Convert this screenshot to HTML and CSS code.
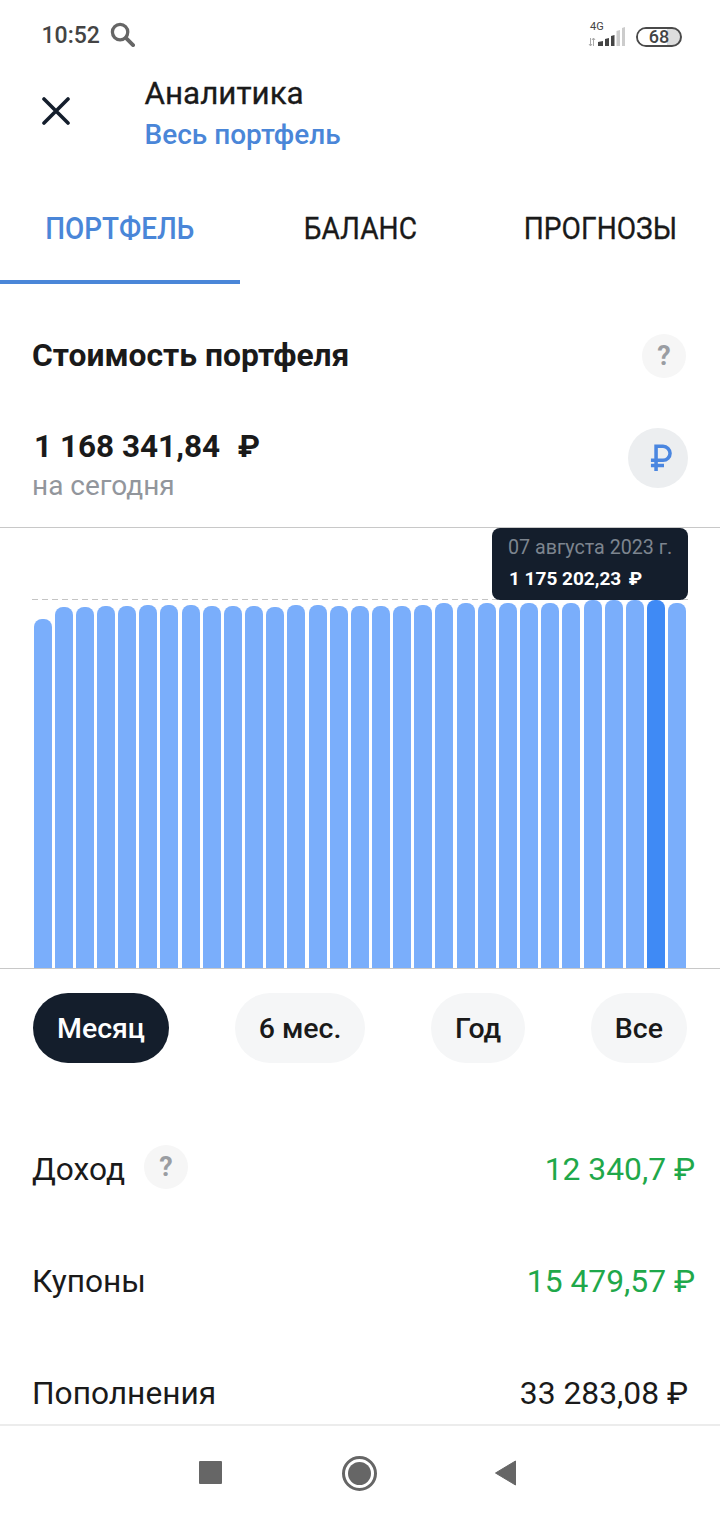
FILE: index.html
```html
<!DOCTYPE html>
<html lang="ru">
<head>
<meta charset="utf-8">
<title>Аналитика</title>
<link rel="stylesheet" href="styles.css">
</head>
<body>
<div class="screen">
  <div class="status">
    <div class="status-left">
      <span class="time">10:52</span>
      <svg class="search" viewBox="0 0 26 26" width="25" height="25"><circle cx="10.500" cy="10.500" r="8" fill="none" stroke="#666" stroke-width="3.400"/><path d="M16.500 16.500L24 24" stroke="#666" stroke-width="4" stroke-linecap="round"/></svg>
    </div>
    <div class="status-right">
      <div class="signal">
        <span class="net">4G</span>
        <svg viewBox="0 0 38 22" width="38" height="22"><path d="M2.500 13v8M1 19l1.500 2L4 19M5.500 21v-8M4 15l1.500-2L7 15" fill="none" stroke="#aaa" stroke-width="1"/><g fill="#444"><path d="M10 17l5-1v5h-5z"/><path d="M17 14l4-1v8h-4z"/><path d="M23 11l3.500-1v11H23z"/></g><g fill="#ccc"><path d="M28.500 6L32 5v16h-3.500z"/><path d="M34 3l3-1v19h-3z"/></g></svg>
      </div>
      <div class="battery"><span class="battery-fill"></span><span class="battery-num">68</span></div>
    </div>
  </div>

  <header class="head">
    <svg class="close" viewBox="0 0 28 28" width="28" height="28"><path d="M2 2L26 26M26 2L2 26" stroke="#141e2c" stroke-width="3.600" stroke-linecap="round"/></svg>
    <div class="head-text">
      <div class="head-title">Аналитика</div>
      <div class="head-sub">Весь портфель</div>
    </div>
  </header>

  <nav class="tabs">
    <div class="tab tab-active"><span class="tab-label">ПОРТФЕЛЬ</span></div>
    <div class="tab"><span class="tab-label">БАЛАНС</span></div>
    <div class="tab"><span class="tab-label">ПРОГНОЗЫ</span></div>
  </nav>

  <main class="content">
    <section class="cost-head">
      <h2 class="cost-title">Стоимость портфеля</h2>
      <span class="help help-big">?</span>
    </section>

    <section class="amount-row">
      <div>
        <div class="amount">1 168 341,84&nbsp; <span class="amount-cur">₽</span></div>
        <div class="amount-sub">на сегодня</div>
      </div>
      <div class="currency">
        <svg viewBox="0 0 24 30" width="22.400" height="28"><path d="M6.500 29V2.500H14a7.500 7.500 0 0 1 0 15H1M1 23H15" fill="none" stroke="#4a86e0" stroke-width="3.800"/></svg>
      </div>
    </section>

    <section class="chart">
      <div class="dash"></div>
      <div class="tooltip">
        <div class="tip-date">07 августа 2023 г.</div>
        <div class="tip-val">1 175 202,23&nbsp; <span class="tip-cur">₽</span></div>
      </div>
      <div class="bars">
        <i class="bar" style="height:349px"></i><i class="bar" style="height:361px"></i><i class="bar" style="height:361px"></i><i class="bar" style="height:362px"></i><i class="bar" style="height:362px"></i><i class="bar" style="height:363px"></i><i class="bar" style="height:363px"></i><i class="bar" style="height:363px"></i><i class="bar" style="height:362px"></i><i class="bar" style="height:362px"></i><i class="bar" style="height:362px"></i><i class="bar" style="height:361px"></i><i class="bar" style="height:363px"></i><i class="bar" style="height:363px"></i><i class="bar" style="height:362px"></i><i class="bar" style="height:362px"></i><i class="bar" style="height:362px"></i><i class="bar" style="height:362px"></i><i class="bar" style="height:363px"></i><i class="bar" style="height:365px"></i><i class="bar" style="height:365px"></i><i class="bar" style="height:365px"></i><i class="bar" style="height:365px"></i><i class="bar" style="height:365px"></i><i class="bar" style="height:365px"></i><i class="bar" style="height:365px"></i><i class="bar" style="height:368px"></i><i class="bar" style="height:368px"></i><i class="bar" style="height:368px"></i><i class="bar bar-on" style="height:368px"></i><i class="bar" style="height:365px"></i>
      </div>
    </section>

    <section class="periods">
      <span class="pill pill-on">Месяц</span>
      <span class="pill">6 мес.</span>
      <span class="pill">Год</span>
      <span class="pill">Все</span>
    </section>

    <section class="rows">
      <div class="row">
        <div class="row-label">Доход <span class="help help-inline">?</span></div>
        <div class="row-val green">12 340,7 ₽</div>
      </div>
      <div class="row">
        <div class="row-label">Купоны</div>
        <div class="row-val green">15 479,57 ₽</div>
      </div>
      <div class="row">
        <div class="row-label">Пополнения</div>
        <div class="row-val">33 283,08 ₽</div>
      </div>
    </section>
  </main>

  <footer class="navbar">
    <span class="nav-square"></span>
    <span class="nav-circle"><span class="nav-dot"></span></span>
    <svg viewBox="0 0 24 28" width="24" height="28"><path d="M22.500 2V26L2.500 14Z" fill="#666" stroke="#666" stroke-width="1" stroke-linejoin="round"/></svg>
  </footer>
</div>
</body>
</html>
```
FILE: styles.css
```css
* { box-sizing: border-box; }
html, body { margin: 0; padding: 0; }
body { background: #fff; font-family: Roboto, "Noto Sans", sans-serif; color: #1a1a1a; }
.screen { width: 720px; height: 1520px; display: flex; flex-direction: column; overflow: hidden; background: #fff; }

.status { height: 70px; flex: none; display: flex; justify-content: space-between; align-items: center; padding: 0 38px 0 41.500px; }
.status-left { display: flex; align-items: center; gap: 10px; }
.time { font-size: 23px; font-weight: 500; color: #444; }
.search { display: block; margin-top: -2px; }
.status-right { display: flex; align-items: flex-end; gap: 10px; }
.signal { position: relative; width: 38px; height: 24px; display: flex; align-items: flex-end; }
.net { position: absolute; left: 2px; top: -2px; font-size: 11px; line-height: 11px; color: #444; }
.signal svg { display: block; }
.battery { position: relative; width: 46px; height: 20px; border: 2.500px solid #4a4a4a; border-radius: 10px; display: flex; align-items: center; justify-content: center; overflow: hidden; background: #ddd; }
.battery-fill { position: absolute; left: 0; top: 0; bottom: 0; width: 68%; background: #fff; }
.battery-num { position: relative; font-size: 18px; line-height: 18px; font-weight: 500; color: #444; }

.head { flex: none; height: 88px; display: flex; align-items: center; padding: 0 0 0 42px; }
.close { display: block; margin-top: -7px; }
.head-text { margin-left: 74.500px; }
.head-title { font-size: 31.400px; line-height: 40px; font-weight: 400; color: #1a1a1a; -webkit-text-stroke: 0.3px #1a1a1a; }
.head-sub { font-size: 28px; line-height: 41px; font-weight: 500; color: #4a86d8; }

.tabs { flex: none; display: grid; grid-template-columns: repeat(3, 240px); height: 126px; }
.tab { display: flex; justify-content: center; align-items: flex-start; padding-top: 52px; }
.tab-label { display: block; font-size: 31px; line-height: 38px; font-weight: 400; color: #1a1a1a; transform: scaleX(0.908); white-space: nowrap; -webkit-text-stroke: 0.3px #1a1a1a; }
.tab-active { border-bottom: 4px solid #4a86d8; }
.tab-active .tab-label { color: #4a86d8; font-weight: 500; transform: scaleX(0.9); -webkit-text-stroke: 0; }

.content { flex: 1; min-height: 0; overflow: hidden; }

.cost-head { display: flex; justify-content: space-between; align-items: center; height: 93px; padding: 49px 34px 0 32px; }
.cost-title { margin: 0; font-size: 31.800px; line-height: 44px; font-weight: 700; color: #1a1a1a; }
.help { display: inline-flex; width: 44px; height: 44px; border-radius: 50%; background: #f6f6f6; color: #9a9da2; font-size: 27px; font-weight: 700; align-items: center; justify-content: center; }
.help-big { margin-top: 2px; }
.help-inline { margin: -4px 0 0 1px; }

.amount-row { display: flex; justify-content: space-between; align-items: flex-start; padding: 48px 32px 0; height: 151px; border-bottom: 1px solid #c8c8c8; }
.amount { font-size: 31.500px; line-height: 44px; font-weight: 700; color: #1a1a1a; padding-left: 2px; }
.amount-cur { margin-left: 2px; }
.amount-sub { font-size: 28px; line-height: 36px; color: #92969c; margin-top: -1px; }
.currency { width: 60px; height: 60px; border-radius: 50%; background: #eceef0; display: flex; align-items: center; justify-content: center; margin-top: 3px; }
.currency svg { display: block; margin-left: 6px; }

.chart { position: relative; height: 441px; border-bottom: 1px solid #c8c8c8; padding: 0 33.500px; display: flex; align-items: flex-end; }
.bars { width: 100%; display: flex; justify-content: space-between; align-items: flex-end; }
.bar { display: block; width: 18px; background: #7aaefb; border-radius: 8px 8px 0 0; }
.bar-on { background: #3f8af5; }
.dash { position: absolute; left: 32px; right: 32px; top: 71px; height: 1px; background: repeating-linear-gradient(90deg, #c4c4c4 0 6px, transparent 6px 10px); }
.tooltip { position: absolute; right: 32px; top: 0; width: 196px; height: 72px; background: #141e2c; border-radius: 8px; padding: 7px 16px 0; z-index: 2; }
.tip-date { font-size: 19.700px; line-height: 26px; color: #7d858f; white-space: nowrap; }
.tip-val { font-size: 19px; line-height: 32px; font-weight: 700; color: #fff; margin-top: 2px; padding-left: 1px; white-space: nowrap; }
.tip-cur { margin-left: -2px; }

.periods { display: flex; justify-content: space-between; padding: 24px 33px 0; }
.pill { height: 70px; border-radius: 35px; background: #f5f6f7; display: flex; align-items: center; justify-content: center; font-size: 28.500px; font-weight: 500; color: #1a1a1a; padding: 0 24px; }
.pill-on { background: #141e2c; color: #fff; }

.rows { padding: 84px 32px 0; }
.row { display: flex; justify-content: space-between; align-items: center; height: 44px; margin-bottom: 68px; }
.row-label { display: flex; align-items: center; gap: 18px; font-size: 31.700px; color: #1a1a1a; }
.row-val { font-size: 31.800px; color: #1a1a1a; }
.green { color: #1fa84a; margin-right: -7px; }

.navbar { flex: none; height: 96px; border-top: 2px solid #ececec; background: #fff; display: flex; align-items: center; padding: 0 203px 0 199px; justify-content: space-between; }
.nav-square { display: block; width: 23px; height: 23px; margin-top: -1px; background: #666; border-radius: 1px; }
.nav-circle { width: 35px; height: 35px; margin-left: 4px; border: 3px solid #666; border-radius: 50%; display: flex; align-items: center; justify-content: center; }
.nav-dot { display: block; width: 23px; height: 23px; border-radius: 50%; background: #666; }
```
